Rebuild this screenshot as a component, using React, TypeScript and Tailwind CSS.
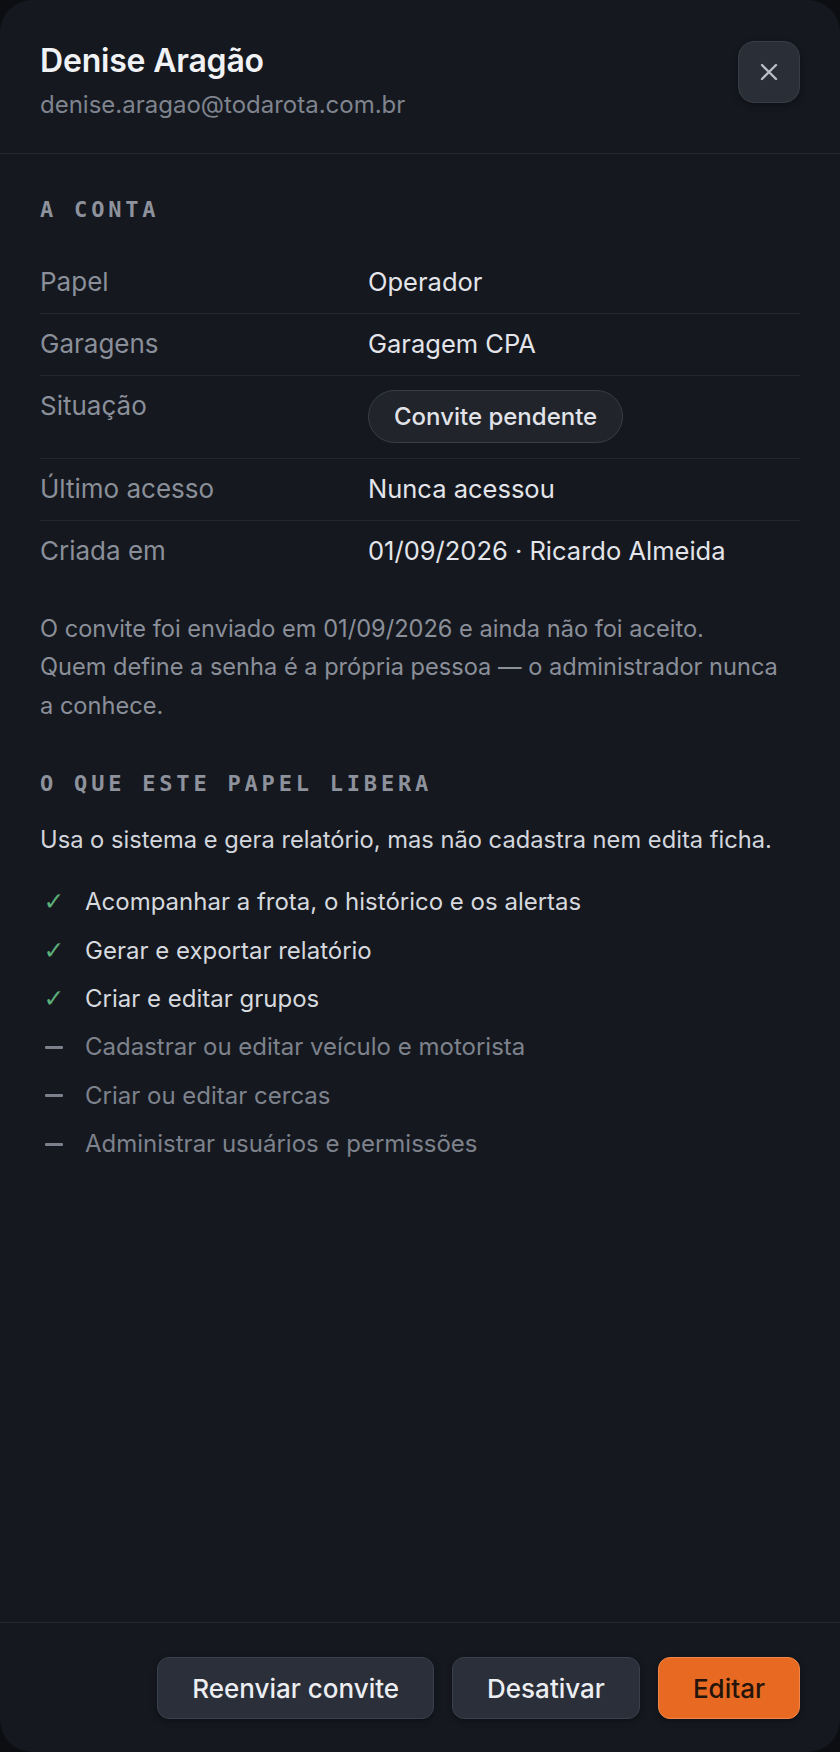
import React from "react";

const rows: { label: string; value?: string; badge?: string }[] = [
  { label: "Papel", value: "Operador" },
  { label: "Garagens", value: "Garagem CPA" },
  { label: "Situação", badge: "Convite pendente" },
  { label: "Último acesso", value: "Nunca acessou" },
  { label: "Criada em", value: "01/09/2026 · Ricardo Almeida" },
];

const perms: { ok: boolean; text: string }[] = [
  { ok: true, text: "Acompanhar a frota, o histórico e os alertas" },
  { ok: true, text: "Gerar e exportar relatório" },
  { ok: true, text: "Criar e editar grupos" },
  { ok: false, text: "Cadastrar ou editar veículo e motorista" },
  { ok: false, text: "Criar ou editar cercas" },
  { ok: false, text: "Administrar usuários e permissões" },
];

export default function App() {
  return (
    <div className="h-[1752px] w-[840px] bg-[#0c0e12] font-['Inter',sans-serif]">
      <div className="flex h-full flex-col overflow-hidden rounded-[32px] bg-[#15181f]">
        {/* Header */}
        <div className="flex items-start justify-between border-b border-[#242830] pl-[40px] pr-[40px] pt-[41px] pb-[32px]">
          <div className="flex flex-col">
            <h1 className="text-[32px] font-semibold leading-[40px] tracking-[-0.2px] text-[#f1f2f5]">
              Denise Aragão
            </h1>
            <p className="mt-[8px] text-[24px] leading-[32px] text-[#7f848e]">
              denise.aragao@todarota.com.br
            </p>
          </div>
          <button className="flex h-[62px] w-[62px] items-center justify-center rounded-[16px] border border-[#383d48] bg-[#2a2e37] shadow-[0_2px_6px_rgba(0,0,0,0.35)]">
            <svg width="18" height="18" viewBox="0 0 18 18" fill="none">
              <path d="M2 2L16 16M16 2L2 16" stroke="#b9bdc6" strokeWidth="2.4" strokeLinecap="round" />
            </svg>
          </button>
        </div>

        {/* Body */}
        <div className="flex flex-1 flex-col px-[40px] pt-[42px]">
          <h2 className="font-['DejaVu_Sans_Mono',monospace] text-[22px] font-bold leading-[28px] tracking-[3.8px] text-[#8d929c]">
            A CONTA
          </h2>

          <div className="mt-[28px] flex flex-col">
            {rows.map((r, i) => (
              <div
                key={r.label}
                className={`flex items-start pt-[14px] pb-[15px] ${i > 0 ? "border-t border-[#23272f]" : ""}`}
              >
                <div className="w-[328px] shrink-0 text-[26px] leading-[32px] text-[#8a8f99]">{r.label}</div>
                {r.badge ? (
                  <span className="inline-flex h-[53px] items-center rounded-full border border-[#393d46] bg-[#21242b] px-[25px] text-[24px] font-medium text-[#e1e3e8]">
                    {r.badge}
                  </span>
                ) : (
                  <div className="text-[25.5px] leading-[32px] text-[#e3e5ea]">{r.value}</div>
                )}
              </div>
            ))}
          </div>

          <p className="mt-[28px] text-[23.6px] leading-[38.4px] text-[#8a8f99]">
            O convite foi enviado em 01/09/2026 e ainda não foi aceito.
            <br />
            Quem define a senha é a própria pessoa — o administrador nunca
            <br />
            a conhece.
          </p>

          <h2 className="mt-[45px] font-['DejaVu_Sans_Mono',monospace] text-[22px] font-bold leading-[28px] tracking-[3.8px] text-[#8d929c]">
            O QUE ESTE PAPEL LIBERA
          </h2>

          <p className="mt-[25px] text-[23.7px] leading-[34px] text-[#d3d6dc]">
            Usa o sistema e gera relatório, mas não cadastra nem edita ficha.
          </p>

          <ul className="mt-[28px] flex flex-col gap-[14.4px]">
            {perms.map((p) => (
              <li key={p.text} className="flex items-center text-[24px] leading-[34px]">
                <span className="flex w-[28px] shrink-0 justify-center">
                  {p.ok ? (
                    <span className="font-['DejaVu_Sans',sans-serif] text-[25px] font-bold leading-[34px] text-[#5aae78]">✓</span>
                  ) : (
                    <span className="block h-[3px] w-[18px] rounded-[1px] bg-[#7b808a]" />
                  )}
                </span>
                <span className={`ml-[17px] ${p.ok ? "text-[#d6d9de]" : "text-[#7d828c]"}`}>{p.text}</span>
              </li>
            ))}
          </ul>
        </div>

        {/* Footer */}
        <div className="flex justify-end gap-[18px] border-t border-[#242830] px-[40px] pt-[34px] pb-[33px]">
          <button className="h-[62px] rounded-[12px] border border-[#3a404b] bg-[#2a2f39] px-[34px] text-[26px] font-medium text-[#eceef2] shadow-[0_2px_6px_rgba(0,0,0,0.35)]">
            Reenviar convite
          </button>
          <button className="h-[62px] rounded-[12px] border border-[#3a404b] bg-[#2a2f39] px-[34px] text-[26px] font-medium text-[#eceef2] shadow-[0_2px_6px_rgba(0,0,0,0.35)]">
            Desativar
          </button>
          <button className="h-[62px] rounded-[12px] border border-[#f0874a] bg-[#e86a22] px-[34px] text-[26px] font-medium text-[#24140a] shadow-[0_2px_6px_rgba(0,0,0,0.35)]">
            Editar
          </button>
        </div>
      </div>
    </div>
  );
}
